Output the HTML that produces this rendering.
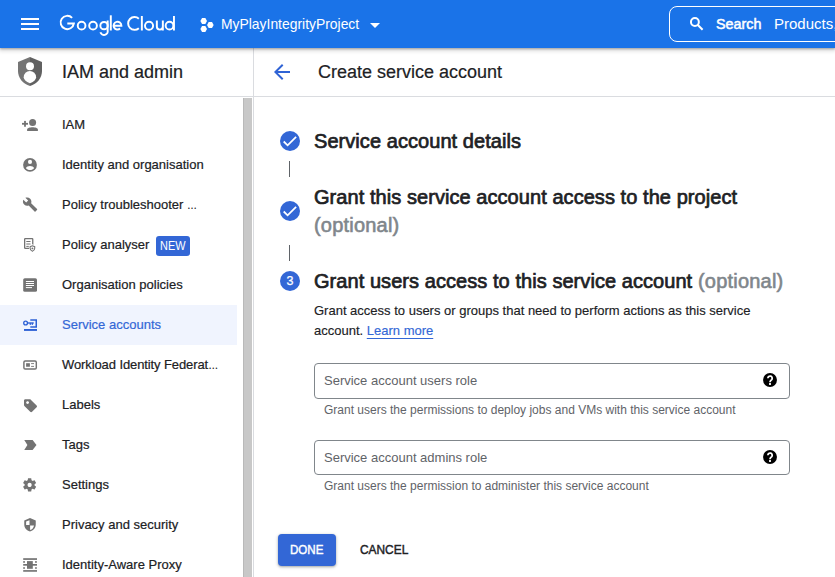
<!DOCTYPE html>
<html><head><meta charset="utf-8">
<style>
*{margin:0;padding:0;box-sizing:border-box}
html,body{width:835px;height:577px;overflow:hidden;background:#fff;font-family:"Liberation Sans",sans-serif;color:#202124}
.a{position:absolute}
.t{position:absolute;white-space:nowrap;line-height:20px}
#hdr{left:0;top:0;width:835px;height:48px;background:#1a73e8;z-index:5;box-shadow:0 1px 2px rgba(0,0,0,.28),0 2px 4px 1px rgba(0,0,0,.14)}
.sx{transform-origin:0 50%}
.hd{font-size:20px;color:#202124;-webkit-text-stroke:0.7px #202124;letter-spacing:0.06px}
.ic path,.ic rect,.ic circle{}
.nav{position:absolute;left:62px;font-size:13px;line-height:20px;white-space:nowrap;color:#202124;-webkit-text-stroke:0.2px currentColor}
.ic{position:absolute;left:18px;width:24px;height:24px}
</style></head><body>

<!-- HEADER -->
<div id="hdr" class="a">
  <svg class="a" style="left:18px;top:12px" width="24" height="24" viewBox="0 0 24 24"><path fill="#fff" d="M3 6h18v2H3zM3 11h18v2H3zM3 16h18v2H3z"/></svg>
  <svg class="a" style="left:0;top:0" width="200" height="48" viewBox="0 0 200 48"><g fill="none" stroke="#fff" stroke-width="1.95">
    <path d="M72.1 17.9A6.65 6.65 0 1 0 73.85 23.5H67.3"/>
    <circle cx="81.6" cy="25.65" r="3.85"/>
    <circle cx="93.05" cy="25.65" r="3.85"/>
    <circle cx="104.05" cy="25.65" r="3.7"/>
    <path d="M107.65 20.4V30.4A3.75 3.75 0 0 1 100.4 32.3"/>
    <path d="M110.8 15.3V30.5"/>
    <path d="M113.6 25.65H121.4A3.9 3.9 0 1 0 120.1 28.6"/>
    <path d="M138.85 18.7A6.4 6.4 0 1 0 138.85 28.2"/>
    <path d="M141.85 16V30.5"/>
    <circle cx="149.05" cy="25.75" r="4.05"/>
    <path d="M156.85 20.6V26.6A3 3 0 0 0 162.85 26.6M162.85 20.6V30.5"/>
    <circle cx="169.5" cy="25.65" r="3.85"/>
    <path d="M173.95 16V30.5"/>
  </g></svg>
  <svg class="a" style="left:199px;top:17px" width="16" height="16" viewBox="0 0 16 16"><g fill="#fff"><polygon points="1.40,4.00 3.05,1.05 6.35,1.05 8.00,4.00 6.35,6.95 3.05,6.95"/><polygon points="1.40,12.00 3.05,9.05 6.35,9.05 8.00,12.00 6.35,14.95 3.05,14.95"/><polygon points="8.05,8.00 9.70,5.05 13.00,5.05 14.65,8.00 13.00,10.95 9.70,10.95"/></g></svg>
  <div class="t sx" style="left:221px;top:14px;font-size:15px;color:#fff;transform:scaleX(0.926)">MyPlayIntegrityProject</div>
  <svg class="a" style="left:363px;top:13px" width="24" height="24" viewBox="0 0 24 24"><path fill="#fff" d="M7 10l5 5 5-5z"/></svg>
  <div class="a" style="left:669px;top:6px;width:200px;height:36px;border:1px solid #fff;border-radius:8px"></div>
  <svg class="a" style="left:684px;top:12px" width="24" height="24" viewBox="0 0 24 24"><circle cx="10.9" cy="10" r="3.95" fill="none" stroke="#fff" stroke-width="2"/><path d="M13.6 12.7L18.6 17.7" stroke="#fff" stroke-width="2.1"/></svg>
  <div class="t sx" style="left:716px;top:14px;font-size:15px;color:#fff;-webkit-text-stroke:0.5px #fff;transform:scaleX(0.955)">Search</div>
  <div class="t" style="left:774px;top:14px;font-size:15px;color:#fff">Products, resources, docs (/)</div>
</div>

<!-- SIDEBAR -->
<div class="a" style="left:0;top:96px;width:253px;height:1px;background:#dadce0"></div>
<div class="a" style="left:253px;top:48px;width:1px;height:529px;background:#dadce0"></div>
<svg class="a" style="left:18px;top:57px" width="24" height="29" viewBox="0 0 24 29">
  <path fill="#757575" d="M12 0L0 5v9c0 7 5 13 12 15z"/>
  <path fill="#616161" d="M12 0l12 5v9c0 7-5 13-12 15z"/>
  <circle cx="12" cy="9.2" r="4" fill="#fff"/>
  <path fill="#fff" d="M5.7 20.2A6.2 6.2 0 0 1 18.1 20.2C18.1 22.3 16.2 24.6 12 26.3C7.8 24.6 5.7 22.3 5.7 20.2z"/>
</svg>
<div class="t" style="left:62px;top:60px;font-size:18px;line-height:24px;-webkit-text-stroke:0.2px #202124">IAM and admin</div>

<div class="a" style="left:0;top:305px;width:237px;height:40px;background:#f0f4fe"></div>
<div class="a" style="left:243px;top:98px;width:9px;height:479px;background:#c8c8c8;border-left:1px solid #b9b9b9"></div>

<!-- nav items -->
<div class="nav" style="top:115px">IAM</div>
<div class="nav" style="top:155px">Identity and organisation</div>
<div class="nav" style="top:195px">Policy troubleshooter <span style="font-size:10px;-webkit-text-stroke:0.2px #202124">…</span></div>
<div class="nav" style="top:235px">Policy analyser</div>
<div class="a" style="left:156px;top:236px;width:34px;height:20px;background:#3367d6;border-radius:3px"></div>
<div class="t sx" style="left:160px;top:236px;font-size:12px;color:#fff;transform:scaleX(0.91)">NEW</div>
<div class="nav" style="top:275px">Organisation policies</div>
<div class="nav" style="top:315px;color:#3367d6">Service accounts</div>
<div class="nav" style="top:355px;letter-spacing:-0.1px">Workload Identity Federat<span style="font-size:10px;-webkit-text-stroke:0.2px #202124">…</span></div>
<div class="nav" style="top:395px">Labels</div>
<div class="nav" style="top:435px">Tags</div>
<div class="nav" style="top:475px">Settings</div>
<div class="nav" style="top:515px">Privacy and security</div>
<div class="nav" style="top:555px">Identity-Aware Proxy</div>


<!-- nav icons -->
<svg class="ic" style="top:113px" viewBox="0 0 24 24"><g fill="#737373"><rect x="4" y="9.9" width="6" height="1.8"/><rect x="6.1" y="7.9" width="1.8" height="5.85"/><circle cx="14.6" cy="9.5" r="3.5"/><path d="M9.1 17.9V16.6C9.1 15 12 14.2 14.5 14.2S19.9 15 19.9 16.6V17.9z"/></g></svg>
<svg class="ic" style="top:153px" viewBox="0 0 24 24"><circle cx="12" cy="11.9" r="6.9" fill="#737373"/><circle cx="12" cy="8.9" r="2.05" fill="#fff"/><path fill="#fff" d="M7.9 14.9C8.5 13.6 10 12.9 12 12.9S15.5 13.6 16.1 14.9C15.2 16.3 13.7 17.1 12 17.1S8.8 16.3 7.9 14.9z"/></svg>
<svg class="ic" style="top:193px" viewBox="0 0 24 24"><path fill="#737373" transform="translate(4.3 3.7) scale(0.65)" d="M22.7 19l-9.1-9.1c.9-2.3.4-5-1.5-6.9-2-2-5-2.4-7.4-1.3L9 6 6 9 1.6 4.7C.4 7.1.9 10.1 2.9 12.1c1.9 1.9 4.6 2.4 6.9 1.5l9.1 9.1c.4.4 1 .4 1.4 0l2.3-2.3c.5-.4.5-1.1.1-1.4z"/></svg>
<svg class="ic" style="top:233px" viewBox="0 0 24 24"><g fill="none" stroke="#737373"><rect x="6.65" y="5.65" width="8.1" height="9.7" rx="0.6" stroke-width="1.3"/><path d="M8.3 8.5h4.2M8.3 11h4.2M8.3 13.4h2.5" stroke-width="1"/></g><path fill="#fff" d="M14.4 11.3l3.4 1.4v2.4c0 2-1.4 3.7-3.4 4.3-2-.6-3.4-2.3-3.4-4.3v-2.4z"/><path fill="#fff" stroke="#737373" stroke-width="1.1" d="M14.4 12.8l2.3 0.9v1.6c0 1.4-1 2.6-2.3 3-1.3-.4-2.3-1.6-2.3-3v-1.6z"/><circle cx="14.4" cy="15.4" r="0.95" fill="#737373"/></svg>
<svg class="ic" style="top:273px" viewBox="0 0 24 24"><rect x="5.2" y="5.2" width="13.8" height="13.6" rx="1.6" fill="#737373"/><path stroke="#fff" stroke-width="1" d="M7.9 8.5h8.1M7.9 10.5h8.1M7.9 12.5h8.1M7.9 14.6h6.1"/></svg>
<svg class="ic" style="top:313px" viewBox="0 0 24 24"><g fill="#2c60d5"><path fill-rule="evenodd" d="M7.6 7.45a2.55 2.55 0 1 0 0 5.1 2.55 2.55 0 1 0 0-5.1zm0 1.35a1.2 1.2 0 1 1 0 2.4 1.2 1.2 0 1 1 0-2.4z"/><rect x="9.8" y="9.35" width="6" height="1.3"/><rect x="11.7" y="9.8" width="1.2" height="2.1"/><rect x="13.7" y="9.8" width="1.2" height="2.1"/><path d="M12.3 6.25H19V14.8H12.3V13.3H17.5V7.75H12.3z"/><rect x="6" y="16" width="13" height="1.9"/></g></svg>
<svg class="ic" style="top:353px" viewBox="0 0 24 24"><rect x="5.9" y="8" width="12.4" height="8" rx="1.3" fill="none" stroke="#737373" stroke-width="1.45"/><rect x="8.1" y="10.2" width="3.8" height="3.55" fill="#737373"/><path stroke="#737373" stroke-width="0.9" d="M13.1 10.6h2.9M13.1 13.4h2.9"/></svg>
<svg class="ic" style="top:393px" viewBox="0 0 24 24"><path fill="#737373" transform="translate(4.7 4.95) scale(0.65)" d="M21.41 11.58l-9-9C12.05 2.22 11.55 2 11 2H4c-1.1 0-2 .9-2 2v7c0 .55.22 1.05.59 1.42l9 9c.36.36.86.58 1.41.58.55 0 1.05-.22 1.41-.59l7-7c.37-.36.59-.86.59-1.41 0-.55-.23-1.06-.59-1.42zM7.5 9.3C6.28 9.3 5.3 8.32 5.3 7.1S6.28 4.9 7.5 4.9 9.7 5.88 9.7 7.1 8.72 9.3 7.5 9.3z"/></svg>
<svg class="ic" style="top:433px" viewBox="0 0 24 24"><path fill="#737373" d="M6.25 6.9H14.6L18.5 11.9L14.6 16.9H6.25L9.4 11.9Z"/></svg>
<svg class="ic" style="top:473px" viewBox="0 0 24 24"><path fill="#737373" fill-rule="evenodd" transform="translate(3.34 3.6) scale(0.69)" d="M19.14 12.94c.04-.3.06-.61.06-.94 0-.32-.02-.64-.07-.94l2.03-1.58c.18-.14.23-.41.12-.61l-1.92-3.32c-.12-.22-.37-.29-.59-.22l-2.39.96c-.5-.38-1.03-.7-1.62-.94l-.36-2.54c-.04-.24-.24-.41-.48-.41h-3.84c-.24 0-.43.17-.47.41l-.36 2.54c-.59.24-1.130.57-1.62.94l-2.39-.96c-.22-.08-.47 0-.59.22L2.74 8.87c-.12.21-.08.47.12.61l2.03 1.58c-.05.3-.09.63-.09.94s.02.64.07.94l-2.03 1.58c-.18.14-.23.41-.12.61l1.92 3.32c.12.22.37.29.59.22l2.39-.96c.5.38 1.03.7 1.62.94l.36 2.54c.05.24.24.41.48.41h3.84c.24 0 .44-.17.47-.41l.36-2.54c.59-.24 1.130-.56 1.62-.94l2.39.96c.22.08.47 0 .59-.22l1.92-3.32c.12-.22.07-.47-.12-.61l-2.01-1.58zM12 15c-1.65 0-3-1.35-3-3s1.35-3 3-3 3 1.35 3 3-1.350 3-3 3z"/></svg>
<svg class="ic" style="top:513px" viewBox="0 0 24 24"><path fill="#737373" fill-rule="evenodd" d="M12 5L6.25 7.4v4.2c0 3.3 2.4 6.3 5.75 6.9 3.35-.6 5.75-3.6 5.75-6.9V7.4z M8.1 8.6L11.5 7.2V12.1H8.1z M12.1 12.5H16C15.7 14.8 14.1 16.6 12.1 17.1z"/></svg>
<svg class="ic" style="top:553px" viewBox="0 0 24 24"><g fill="#737373"><rect x="5.2" y="5.2" width="13.8" height="1.7"/><rect x="5.2" y="8.1" width="1.7" height="1.7"/><rect x="17.1" y="8.1" width="1.7" height="1.7"/><rect x="5.2" y="11" width="13.8" height="1.7"/><rect x="9" y="8.1" width="5.8" height="7.7"/><rect x="5.2" y="14.2" width="1.7" height="1.6"/><rect x="17.1" y="14.2" width="1.7" height="1.6"/><rect x="5.2" y="17.1" width="13.8" height="1.65"/></g></svg>

<!-- MAIN -->
<div class="a" style="left:254px;top:96px;width:581px;height:1px;background:#dadce0"></div>
<svg class="a" style="left:270px;top:60px" width="24" height="24" viewBox="0 0 24 24"><path fill="#2f63d5" d="M20 11H7.83l5.59-5.59L12 4l-8 8 8 8 1.41-1.41L7.83 13H20v-2z"/></svg>
<div class="t" style="left:318px;top:60px;font-size:18px;line-height:24px;-webkit-text-stroke:0.2px #202124">Create service account</div>

<!-- steps -->
<svg class="a" style="left:280px;top:131px" width="20" height="20" viewBox="0 0 20 20"><circle cx="10" cy="10" r="10" fill="#3367d6"/><path fill="none" stroke="#fff" stroke-width="1.75" d="M3.7 10.5L7.6 14.3L16.1 5.8"/></svg>
<div class="t hd" style="left:314px;top:131px;line-height:20px">Service account details</div>
<div class="a" style="left:289px;top:161px;width:1px;height:16px;background:#5f6368"></div>

<svg class="a" style="left:280px;top:201px" width="20" height="20" viewBox="0 0 20 20"><circle cx="10" cy="10" r="10" fill="#3367d6"/><path fill="none" stroke="#fff" stroke-width="1.75" d="M3.7 10.5L7.6 14.3L16.1 5.8"/></svg>
<div class="t hd" style="left:314px;top:183px;line-height:28px">Grant this service account access to the project</div>
<div class="t" style="left:314px;top:211px;font-size:20px;line-height:28px;color:#80868b;letter-spacing:0.2px;-webkit-text-stroke:0.6px #80868b">(optional)</div>
<div class="a" style="left:289px;top:245px;width:1px;height:16px;background:#5f6368"></div>

<svg class="a" style="left:280px;top:271px" width="20" height="20" viewBox="0 0 20 20"><circle cx="10" cy="10" r="10" fill="#3367d6"/></svg>
<div class="t" style="left:280px;top:271px;width:20px;text-align:center;font-size:12.5px;color:#fff;-webkit-text-stroke:0.25px #fff">3</div>
<div class="t hd" style="left:314px;top:271px;line-height:20px">Grant users access to this service account</div>
<div class="t" style="left:698px;top:271px;font-size:20px;line-height:20px;color:#80868b;letter-spacing:0.2px;-webkit-text-stroke:0.6px #80868b">(optional)</div>

<div class="t sx" style="left:314px;top:301px;font-size:13px;line-height:20px;-webkit-text-stroke:0.15px #202124">Grant access to users or groups that need to perform actions as this service</div>
<div class="t sx" style="left:314px;top:321px;font-size:13px;line-height:20px;-webkit-text-stroke:0.15px currentColor">account. <span style="color:#3367d6;text-decoration:underline;text-underline-offset:3px">Learn more</span></div>

<!-- inputs -->
<div class="a" style="left:314px;top:363px;width:476px;height:36px;border:1px solid #80868b;border-radius:4px"></div>
<div class="t" style="left:324px;top:371px;font-size:13px;color:#5f6368">Service account users role</div>
<svg class="a" style="left:762px;top:372px" width="16" height="16" viewBox="0 0 16 16"><circle cx="8" cy="8" r="6.95" fill="#000"/><path d="M5.9 6.3A2.15 2.15 0 1 1 9.7 7.6C8.9 8.4 8 8.7 8 10.3" fill="none" stroke="#fff" stroke-width="1.75"/><rect x="7.05" y="11.05" width="1.9" height="1.9" fill="#fff"/></svg>
<div class="t" style="left:324px;top:400px;font-size:12px;color:#5f6368">Grant users the permissions to deploy jobs and VMs with this service account</div>

<div class="a" style="left:314px;top:440px;width:476px;height:35px;border:1px solid #80868b;border-radius:4px"></div>
<div class="t" style="left:324px;top:448px;font-size:13px;color:#5f6368">Service account admins role</div>
<svg class="a" style="left:762px;top:449px" width="16" height="16" viewBox="0 0 16 16"><circle cx="8" cy="8" r="6.95" fill="#000"/><path d="M5.9 6.3A2.15 2.15 0 1 1 9.7 7.6C8.9 8.4 8 8.7 8 10.3" fill="none" stroke="#fff" stroke-width="1.75"/><rect x="7.05" y="11.05" width="1.9" height="1.9" fill="#fff"/></svg>
<div class="t" style="left:324px;top:476px;font-size:12px;color:#5f6368">Grant users the permission to administer this service account</div>

<!-- buttons -->
<div class="a" style="left:278px;top:534px;width:58px;height:32px;background:#3367d6;border-radius:4px;box-shadow:0 1px 2px rgba(60,64,67,.3),0 1px 3px 1px rgba(60,64,67,.15)"></div>
<div class="t sx" style="left:290px;top:540px;font-size:13px;color:#fff;-webkit-text-stroke:0.45px #fff;transform:scaleX(0.89)">DONE</div>
<div class="t sx" style="left:360px;top:540px;font-size:13px;color:#202124;-webkit-text-stroke:0.45px #202124;transform:scaleX(0.915)">CANCEL</div>

</body></html>
